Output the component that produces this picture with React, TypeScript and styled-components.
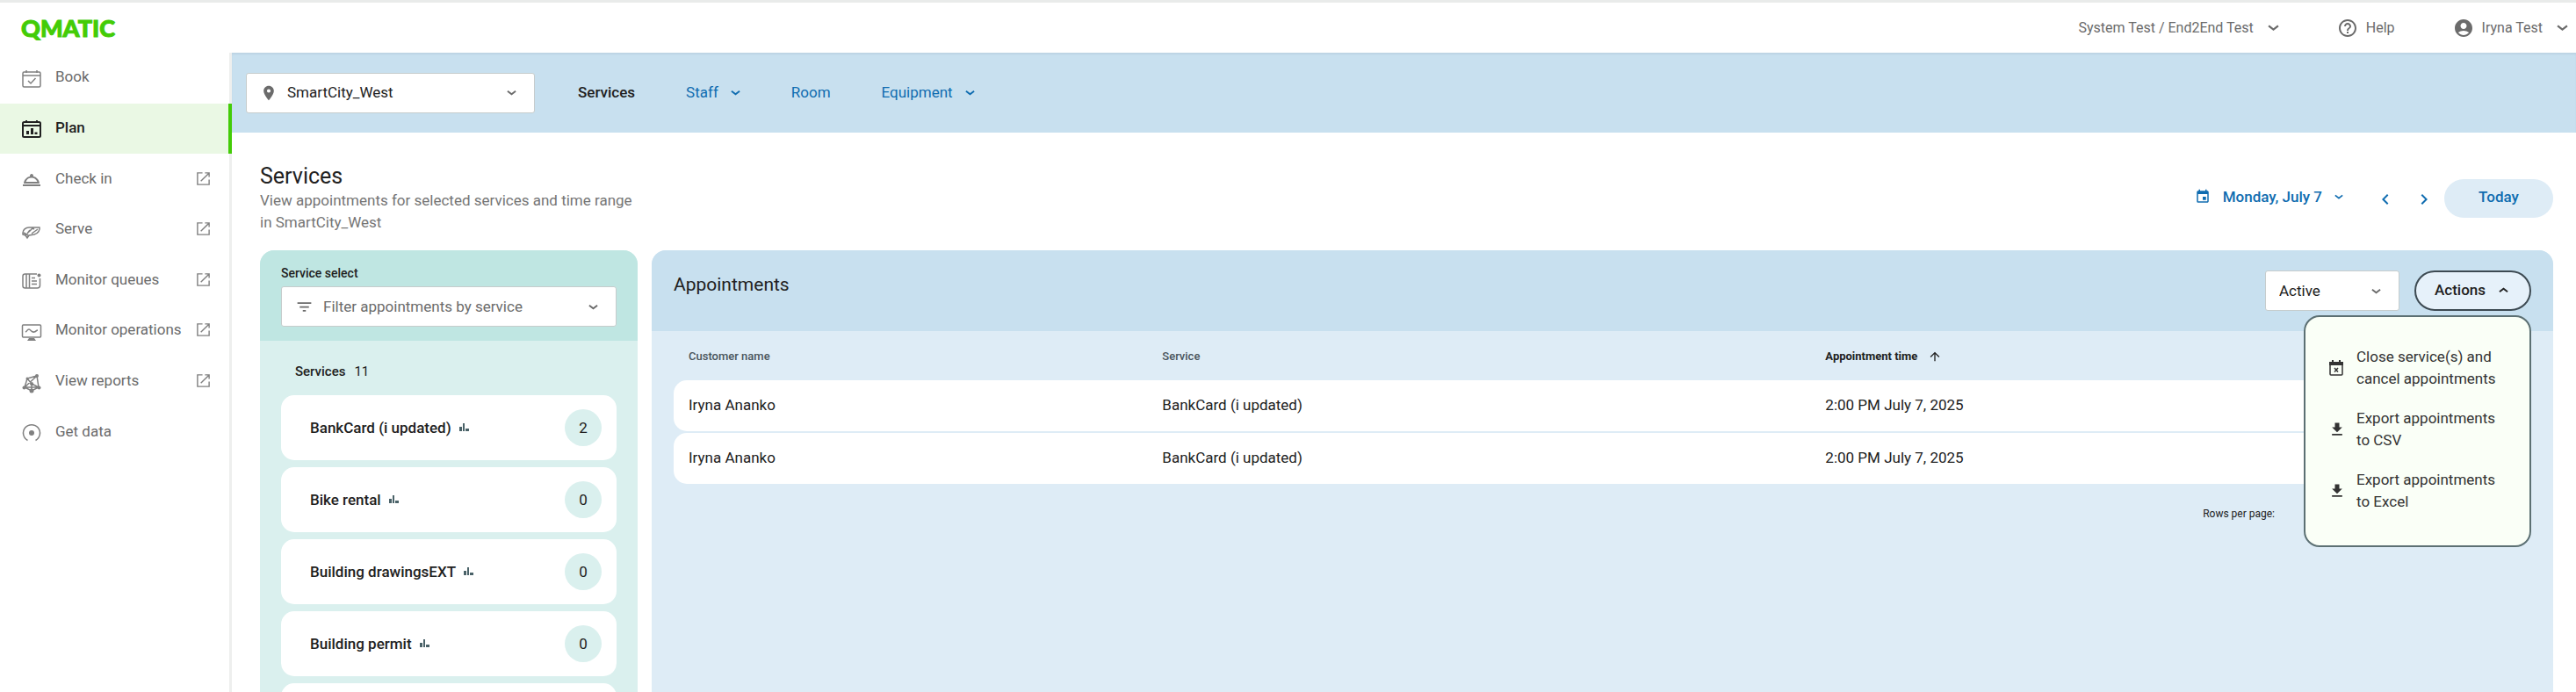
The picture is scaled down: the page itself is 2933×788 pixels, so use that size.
import React from "react";
import styled, { createGlobalStyle } from "styled-components";
import {
  MdAccountCircle,
  MdArrowUpward,
  MdChevronLeft,
  MdChevronRight,
  MdEvent,
  MdFileDownload,
  MdFilterList,
  MdHelpOutline,
  MdPlace,
  MdOutlineRoomService,
} from "react-icons/md";

const c = {
  text: "#212121",
  muted: "#6b6b6b",
  icon: "#808080",
  link: "#0f6cb0",
  green: "#43cc07",
  blue: "#c8e0ef",
  paleBlue: "#deecf6",
  teal: "#bfe6e2",
  paleTeal: "#daf0ee",
};

const GlobalStyle = createGlobalStyle`
  * { box-sizing: border-box; }
  html, body, #root { height: 100%; }
  body {
    margin: 0;
    background: #fff;
    color: ${c.text};
    font: 400 17px/25px Roboto, "Liberation Sans", sans-serif;
  }
  button, select { font: inherit; color: inherit; }
  a { color: inherit; text-decoration: none; }
  svg { display: block; flex: none; }
`;

const Page = styled.div`
  display: flex;
  flex-direction: column;
  height: 100%;
`;

const TopBar = styled.header`
  display: flex;
  align-items: center;
  flex: none;
  height: 60px;
  padding: 0 9px 0 24px;
  border-top: 3px solid #e9ebea;
  color: ${c.muted};
  font-size: 16px;
`;

const Logo = styled.a`
  margin-right: auto;
  color: ${c.green};
  font: 900 27px/28px Lato, sans-serif;
  -webkit-text-stroke: 1px ${c.green};
`;

const PlainButton = styled.button`
  display: flex;
  align-items: center;
  padding: 0;
  border: 0;
  background: none;
  cursor: pointer;
`;

const TopButton = styled(PlainButton)`
  gap: 16px;
  margin-left: 66px;
`;

const TopLabel = styled.span`
  display: flex;
  align-items: center;
  gap: 9px;
`;

const Body = styled.div`
  display: flex;
  flex: 1;
  min-height: 0;
`;

const Sidebar = styled.nav`
  flex: none;
  width: 264px;
  border-right: 3px solid #eeefee;
`;

const NavList = styled.ul`
  display: grid;
  grid-auto-rows: 1fr;
  height: 461px;
  margin: 0 -3px 0 0;
  padding: 0;
  list-style: none;
`;

const NavLink = styled.a<{ $active?: boolean }>`
  display: flex;
  align-items: center;
  height: 100%;
  padding: 0 20px 2px 24px;
  border-right: 4px solid ${(p) => (p.$active ? c.green : "transparent")};
  background: ${(p) => (p.$active ? "#eaf8e4" : "transparent")};
  color: ${(p) => (p.$active ? c.text : c.muted)};
  font-weight: ${(p) => (p.$active ? 500 : 400)};
`;

const NavIcon = styled.span<{ $active?: boolean }>`
  padding-top: 4px;
  color: ${(p) => (p.$active ? c.text : c.icon)};
`;

const NavLabel = styled.span`
  flex: 1;
  margin-left: 15px;
`;

const Main = styled.main`
  display: flex;
  flex: 1;
  flex-direction: column;
  min-width: 0;
`;

const SubBar = styled.div`
  display: flex;
  align-items: center;
  flex: none;
  height: 91px;
  padding-left: 16px;
  background: ${c.blue};
  box-shadow: inset 0 2px 2px rgba(0, 40, 60, 0.06);
`;

const Field = styled.div<{ $width?: string }>`
  display: flex;
  align-items: center;
  width: ${(p) => p.$width ?? "auto"};
  height: 46px;
  padding: 0 20px 0 15px;
  border: 1px solid #c6cccc;
  border-radius: 3px;
  background: #fff;
  color: ${c.muted};
`;

const Select = styled.select<{ $muted?: boolean }>`
  flex: 1;
  min-width: 0;
  height: 100%;
  padding: 0;
  border: 0;
  outline: 0;
  appearance: none;
  background: none;
  color: ${(p) => (p.$muted ? c.muted : c.text)};
`;

const FieldIcon = styled.span`
  margin-right: 11px;
`;

const Tabs = styled.nav`
  display: flex;
  align-items: center;
  gap: 58px;
  margin-left: 49px;
  color: ${c.link};
`;

const Tab = styled.a<{ $active?: boolean }>`
  color: ${(p) => (p.$active ? c.text : "inherit")};
  font-weight: ${(p) => (p.$active ? 500 : 400)};
`;

const TabButton = styled(PlainButton)`
  gap: 14px;
`;

const Intro = styled.section`
  display: flex;
  justify-content: space-between;
  height: 134px;
  padding: 35px 26px 0 32px;
`;

const Title = styled.h1`
  margin: 0;
  font-size: 25px;
  font-weight: 400;
  line-height: 30px;
`;

const Lead = styled.p`
  width: 430px;
  margin: 0;
  color: #757575;
`;

const DateBar = styled.div`
  display: flex;
  align-items: center;
  height: 44px;
  margin-top: 18px;
  color: ${c.link};
`;

const DateButton = styled(PlainButton)`
  gap: 14px;
  padding-bottom: 4px;
  font-weight: 500;
`;

const Stepper = styled.div`
  display: flex;
  gap: 20px;
  margin: 2px 11px 0 36px;
`;

const Today = styled.button`
  width: 124px;
  height: 44px;
  padding: 0 0 4px;
  border: 0;
  border-radius: 22px;
  background: ${c.paleBlue};
  font-weight: 500;
  cursor: pointer;
`;

const Panels = styled.div`
  display: flex;
  flex: 1;
  gap: 16px;
  min-height: 0;
  padding: 0 26px 0 32px;
`;

const Panel = styled.section<{ $tone: string; $width?: string }>`
  flex: ${(p) => (p.$width ? `0 0 ${p.$width}` : "1")};
  min-width: 0;
  overflow: ${(p) => (p.$width ? "hidden" : "visible")};
  border-radius: 16px 16px 0 0;
  background: ${(p) => p.$tone};
`;

const FilterHead = styled.div`
  height: 103px;
  padding: 14px 24px 0;
  background: ${c.teal};
`;

const SmallLabel = styled.label`
  display: block;
  margin-bottom: 2px;
  font-size: 14px;
  font-weight: 500;
`;

const ServiceCount = styled.h2`
  display: flex;
  gap: 10px;
  margin: 0;
  padding: 23px 40px 14px;
  font-size: 15px;
  font-weight: 500;
  line-height: 25px;
  span { font-weight: 400; }
`;

const Cards = styled.ul`
  display: flex;
  flex-direction: column;
  gap: 8px;
  margin: 0;
  padding: 0 24px;
  list-style: none;
`;

const Card = styled.li`
  display: flex;
  align-items: center;
  flex: none;
  gap: 9px;
  height: 74px;
  padding: 0 17px 0 33px;
  border-radius: 15px;
  background: #fff;
  font-weight: 500;
`;

const Badge = styled.span`
  display: grid;
  place-items: center;
  width: 42px;
  height: 42px;
  margin-left: auto;
  border-radius: 50%;
  background: ${c.paleTeal};
  font-weight: 400;
`;

const TableHead = styled.div`
  display: flex;
  align-items: center;
  gap: 17px;
  height: 92px;
  padding: 0 25px;
  border-radius: 16px 16px 0 0;
  background: ${c.blue};
`;

const TableTitle = styled.h2`
  margin: 0 auto 14px 0;
  font-size: 21px;
  font-weight: 400;
`;

const MenuAnchor = styled.div`
  position: relative;
`;

const ActionsButton = styled(PlainButton)`
  justify-content: space-between;
  width: 133px;
  height: 46px;
  padding: 0 24px 2px 21px;
  border: 2px solid #3d4a52;
  border-radius: 23px;
  background: #e6f1fa;
  font-weight: 500;
`;

const Menu = styled.div`
  position: absolute;
  z-index: 1;
  top: 51px;
  right: 0;
  display: flex;
  flex-direction: column;
  gap: 20px;
  width: 259px;
  padding: 33px 24px 37px 26px;
  border: 2px solid #5c7073;
  border-radius: 18px;
  background: #fafff7;
  color: #333;
`;

const MenuItem = styled(PlainButton)`
  gap: 14px;
  width: 100%;
  text-align: left;
`;

const MenuIcon = styled.span`
  display: grid;
  place-items: center;
  flex: none;
  width: 18px;
`;

const Table = styled.table`
  width: calc(100% - 50px);
  margin: 0 25px;
  border-collapse: separate;
  border-spacing: 0 2px;
  table-layout: fixed;
`;

const Th = styled.th<{ $width?: string; $sorted?: boolean }>`
  width: ${(p) => p.$width ?? "auto"};
  height: 52px;
  padding: 0 0 0 17px;
  color: ${(p) => (p.$sorted ? c.text : "#4a555c")};
  font-size: 13px;
  font-weight: ${(p) => (p.$sorted ? 700 : 500)};
  text-align: left;
  svg { display: inline-block; margin-left: 8px; vertical-align: middle; }
`;

const Td = styled.td`
  height: 58px;
  padding: 0 0 2px 17px;
  background: #fff;
  &:first-child { border-radius: 15px 0 0 15px; }
  &:last-child { border-radius: 0 15px 15px 0; }
`;

const Pager = styled.div`
  padding: 20px 317px 0 0;
  font-size: 12px;
  text-align: right;
`;

const Chevron = ({ up = false, size = 11 }: { up?: boolean; size?: number }) => (
  <svg width={size} height={size} viewBox="0 0 12 12" fill="none" stroke="currentColor" strokeWidth="2">
    <path d={up ? "M1 8l5-4 5 4" : "M1 4l5 4 5-4"} />
  </svg>
);

const Line = ({ children }: { children: React.ReactNode }) => (
  <svg width="24" height="24" viewBox="0 0 24 24" fill="none" stroke="currentColor" strokeWidth="1.5">
    {children}
  </svg>
);

const CalendarFrame = () => (
  <>
    <rect x="2" y="4" width="20" height="17" rx="1.5" />
    <path d="M2 8h20M6 2v3M18 2v3" />
  </>
);

const BookIcon = () => (
  <Line>
    <CalendarFrame />
    <path d="M8 14l3 3 5.5-6" />
  </Line>
);

const PlanIcon = () => (
  <Line>
    <g strokeWidth="2">
      <CalendarFrame />
    </g>
    <path d="M7.5 18v-4M12.5 18v-7M17 18v-2.5" strokeWidth="3" />
  </Line>
);

const ServeIcon = () => (
  <Line>
    <path d="M2 14c0-3 3-6 7-6h12c1 3-2 7-6 8l-6 1-2 3-2-3-3-1zM3 14l5 3M9 13l4-4 2 1M12 15l7-5M10 11l-3 4" />
  </Line>
);

const QueuesIcon = () => (
  <Line>
    <path d="M18 4H4.5Q2 4 2 6.5v11Q2 20 4.5 20h14q3 0 3-3V9M6 4v16M9.5 4v16" />
    <path d="M12 8.5h4M12 12h6M12 15.5h6" />
    <circle cx="20.5" cy="5.5" r="2" fill="currentColor" stroke="none" />
  </Line>
);

const OperationsIcon = () => (
  <Line>
    <rect x="1.5" y="4" width="21" height="14" rx="1" />
    <path d="M5 12c2-1 2-3 4-3s3 4 6 3 2-2 4-2" />
    <path d="M9 19h6l2 3H7z" fill="currentColor" stroke="none" />
  </Line>
);

const ReportsIcon = () => (
  <Line>
    <path d="M7 7L18 4 20 17 12 21 4 17zM4 17L18 4M7 7l5 6 8 4M12 13v8M4 17h16" />
    <g fill="currentColor" stroke="none">
      <circle cx="7" cy="7" r="1.5" />
      <circle cx="18" cy="4" r="2" />
      <circle cx="12" cy="13" r="2" />
      <circle cx="3.5" cy="17.5" r="2" />
      <circle cx="20.5" cy="17.5" r="2" />
      <circle cx="12" cy="21" r="2.5" />
    </g>
  </Line>
);

const DataIcon = () => (
  <Line>
    <path d="M7.5 20.5a9.5 9.5 0 1 1 9 0" />
    <circle cx="12" cy="12" r="3" fill="currentColor" stroke="none" />
  </Line>
);

const ExternalIcon = () => (
  <svg width="17" height="17" viewBox="0 0 18 18" fill="none" stroke={c.icon} strokeWidth="1.5">
    <path d="M8 2H2v14h14v-6M11 2h5v5M16 2L6 12" />
  </svg>
);

const BarsIcon = () => (
  <svg width="11" height="10" viewBox="0 0 11 10" fill="#4a6268">
    <path d="M0 4h3v5H0zM4 0h2v9H4zM7 6h4v3H7z" />
  </svg>
);

const CalendarCancelIcon = () => (
  <svg width="18" height="18" viewBox="0 0 18 18" fill="none" stroke="currentColor">
    <rect x="2" y="3" width="14" height="14" rx="1" strokeWidth="1.5" />
    <path d="M1 4h16" strokeWidth="4" />
    <path d="M5 0v3M13 0v3" strokeWidth="2" />
    <path d="M7 9l4 4.5M11 9l-4 4.5" strokeWidth="1.5" />
  </svg>
);

const navItems = [
  { label: "Book", icon: <BookIcon /> },
  { label: "Plan", icon: <PlanIcon />, active: true },
  { label: "Check in", icon: <MdOutlineRoomService size={24} />, external: true },
  { label: "Serve", icon: <ServeIcon />, external: true },
  { label: "Monitor queues", icon: <QueuesIcon />, external: true },
  { label: "Monitor operations", icon: <OperationsIcon />, external: true },
  { label: "View reports", icon: <ReportsIcon />, external: true },
  { label: "Get data", icon: <DataIcon /> },
];

const services = [
  { name: "BankCard (i updated)", count: 2 },
  { name: "Bike rental", count: 0 },
  { name: "Building drawingsEXT", count: 0 },
  { name: "Building permit", count: 0 },
];

const appointments = [
  { id: 1, customer: "Iryna Ananko", service: "BankCard (i updated)", time: "2:00 PM July 7, 2025" },
  { id: 2, customer: "Iryna Ananko", service: "BankCard (i updated)", time: "2:00 PM July 7, 2025" },
];

const actions = [
  { label: "Close service(s) and cancel appointments", icon: <CalendarCancelIcon /> },
  { label: "Export appointments to CSV", icon: <MdFileDownload size={20} /> },
  { label: "Export appointments to Excel", icon: <MdFileDownload size={20} /> },
];

export default function App() {
  return (
    <Page>
      <GlobalStyle />
      <TopBar>
        <Logo href="#">QMATIC</Logo>
        <TopButton>
          System Test / End2End Test <Chevron size={13} />
        </TopButton>
        <TopButton>
          <TopLabel>
            <MdHelpOutline size={24} /> Help
          </TopLabel>
        </TopButton>
        <TopButton>
          <TopLabel>
            <MdAccountCircle size={24} /> Iryna Test
          </TopLabel>
          <Chevron size={13} />
        </TopButton>
      </TopBar>
      <Body>
        <Sidebar>
          <NavList>
            {navItems.map((item) => (
              <li key={item.label}>
                <NavLink href="#" $active={item.active}>
                  <NavIcon $active={item.active}>{item.icon}</NavIcon>
                  <NavLabel>{item.label}</NavLabel>
                  {item.external && <ExternalIcon />}
                </NavLink>
              </li>
            ))}
          </NavList>
        </Sidebar>
        <Main>
          <SubBar>
            <Field $width="329px">
              <FieldIcon>
                <MdPlace size={20} />
              </FieldIcon>
              <Select aria-label="Branch" defaultValue="west">
                <option value="west">SmartCity_West</option>
              </Select>
              <Chevron />
            </Field>
            <Tabs>
              <Tab href="#" $active>
                Services
              </Tab>
              <TabButton>
                Staff <Chevron />
              </TabButton>
              <Tab href="#">Room</Tab>
              <TabButton>
                Equipment <Chevron />
              </TabButton>
            </Tabs>
          </SubBar>
          <Intro>
            <div>
              <Title>Services</Title>
              <Lead>View appointments for selected services and time range in SmartCity_West</Lead>
            </div>
            <DateBar>
              <DateButton>
                <MdEvent size={18} /> Monday, July 7 <Chevron size={10} />
              </DateButton>
              <Stepper>
                <PlainButton aria-label="Previous day">
                  <MdChevronLeft size={24} />
                </PlainButton>
                <PlainButton aria-label="Next day">
                  <MdChevronRight size={24} />
                </PlainButton>
              </Stepper>
              <Today>Today</Today>
            </DateBar>
          </Intro>
          <Panels>
            <Panel $tone={c.paleTeal} $width="430px">
              <FilterHead>
                <SmallLabel htmlFor="service-filter">Service select</SmallLabel>
                <Field>
                  <FieldIcon>
                    <MdFilterList size={21} />
                  </FieldIcon>
                  <Select id="service-filter" $muted defaultValue="">
                    <option value="">Filter appointments by service</option>
                  </Select>
                  <Chevron />
                </Field>
              </FilterHead>
              <ServiceCount>
                Services <span>11</span>
              </ServiceCount>
              <Cards>
                {services.map((service) => (
                  <Card key={service.name}>
                    {service.name} <BarsIcon />
                    <Badge>{service.count}</Badge>
                  </Card>
                ))}
                <Card />
              </Cards>
            </Panel>
            <Panel $tone={c.paleBlue}>
              <TableHead>
                <TableTitle>Appointments</TableTitle>
                <Field $width="153px">
                  <Select aria-label="Status" defaultValue="active">
                    <option value="active">Active</option>
                  </Select>
                  <Chevron />
                </Field>
                <MenuAnchor>
                  <ActionsButton aria-expanded="true">
                    Actions <Chevron up />
                  </ActionsButton>
                  <Menu>
                    {actions.map((action) => (
                      <MenuItem key={action.label}>
                        <MenuIcon>{action.icon}</MenuIcon>
                        {action.label}
                      </MenuItem>
                    ))}
                  </Menu>
                </MenuAnchor>
              </TableHead>
              <Table>
                <thead>
                  <tr>
                    <Th $width="25.5%">Customer name</Th>
                    <Th $width="35.7%">Service</Th>
                    <Th $sorted aria-sort="ascending">
                      Appointment time <MdArrowUpward size={16} />
                    </Th>
                  </tr>
                </thead>
                <tbody>
                  {appointments.map((row) => (
                    <tr key={row.id}>
                      <Td>{row.customer}</Td>
                      <Td>{row.service}</Td>
                      <Td>{row.time}</Td>
                    </tr>
                  ))}
                </tbody>
              </Table>
              <Pager>Rows per page:</Pager>
            </Panel>
          </Panels>
        </Main>
      </Body>
    </Page>
  );
}
